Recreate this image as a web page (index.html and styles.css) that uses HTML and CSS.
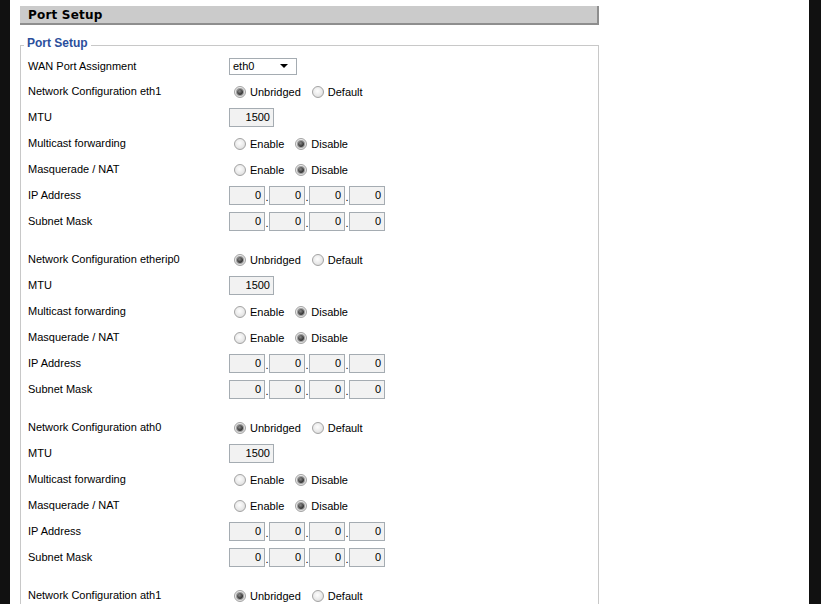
FILE: index.html
```html
<!DOCTYPE html>
<html lang="en">
<head>
    <meta charset="UTF-8">
    <title>Port Setup</title>
<link rel="stylesheet" href="styles.css">
</head>
<body>
<div id="frame">
    <div class="pageTitle">Port Setup</div>
    <fieldset>
        <legend>Port Setup</legend>

        <div class="row first">
            <div class="lab">WAN Port Assignment</div>
            <div class="sel"><span>eth0</span><i class="arrow"></i></div>
        </div>

        <div class="group">
            <div class="row"><div class="lab">Network Configuration eth1</div>
                <div class="opt one"><span class="radio on"></span>Unbridged</div><div class="opt"><span class="radio"></span>Default</div></div>
            <div class="row"><div class="lab">MTU</div><div class="txt mtu">1500</div></div>
            <div class="row"><div class="lab">Multicast forwarding</div>
                <div class="opt one"><span class="radio"></span>Enable</div><div class="opt"><span class="radio on"></span>Disable</div></div>
            <div class="row"><div class="lab">Masquerade / NAT</div>
                <div class="opt one"><span class="radio"></span>Enable</div><div class="opt"><span class="radio on"></span>Disable</div></div>
            <div class="row"><div class="lab">IP Address</div>
                <div class="txt ip">0</div><b>.</b><div class="txt ip">0</div><b>.</b><div class="txt ip">0</div><b>.</b><div class="txt ip">0</div></div>
            <div class="row"><div class="lab">Subnet Mask</div>
                <div class="txt ip">0</div><b>.</b><div class="txt ip">0</div><b>.</b><div class="txt ip">0</div><b>.</b><div class="txt ip">0</div></div>
        </div>

        <div class="group">
            <div class="row"><div class="lab">Network Configuration etherip0</div>
                <div class="opt one"><span class="radio on"></span>Unbridged</div><div class="opt"><span class="radio"></span>Default</div></div>
            <div class="row"><div class="lab">MTU</div><div class="txt mtu">1500</div></div>
            <div class="row"><div class="lab">Multicast forwarding</div>
                <div class="opt one"><span class="radio"></span>Enable</div><div class="opt"><span class="radio on"></span>Disable</div></div>
            <div class="row"><div class="lab">Masquerade / NAT</div>
                <div class="opt one"><span class="radio"></span>Enable</div><div class="opt"><span class="radio on"></span>Disable</div></div>
            <div class="row"><div class="lab">IP Address</div>
                <div class="txt ip">0</div><b>.</b><div class="txt ip">0</div><b>.</b><div class="txt ip">0</div><b>.</b><div class="txt ip">0</div></div>
            <div class="row"><div class="lab">Subnet Mask</div>
                <div class="txt ip">0</div><b>.</b><div class="txt ip">0</div><b>.</b><div class="txt ip">0</div><b>.</b><div class="txt ip">0</div></div>
        </div>

        <div class="group">
            <div class="row"><div class="lab">Network Configuration ath0</div>
                <div class="opt one"><span class="radio on"></span>Unbridged</div><div class="opt"><span class="radio"></span>Default</div></div>
            <div class="row"><div class="lab">MTU</div><div class="txt mtu">1500</div></div>
            <div class="row"><div class="lab">Multicast forwarding</div>
                <div class="opt one"><span class="radio"></span>Enable</div><div class="opt"><span class="radio on"></span>Disable</div></div>
            <div class="row"><div class="lab">Masquerade / NAT</div>
                <div class="opt one"><span class="radio"></span>Enable</div><div class="opt"><span class="radio on"></span>Disable</div></div>
            <div class="row"><div class="lab">IP Address</div>
                <div class="txt ip">0</div><b>.</b><div class="txt ip">0</div><b>.</b><div class="txt ip">0</div><b>.</b><div class="txt ip">0</div></div>
            <div class="row"><div class="lab">Subnet Mask</div>
                <div class="txt ip">0</div><b>.</b><div class="txt ip">0</div><b>.</b><div class="txt ip">0</div><b>.</b><div class="txt ip">0</div></div>
        </div>

        <div class="group">
            <div class="row"><div class="lab">Network Configuration ath1</div>
                <div class="opt one"><span class="radio on"></span>Unbridged</div><div class="opt"><span class="radio"></span>Default</div></div>
        </div>
    </fieldset>
</div>
</body>
</html>
```

FILE: styles.css
```css
*{
    margin:0;
    padding:0;
    box-sizing:border-box;
}
body{
    background:#111;
    font-family:"Liberation Sans",Arial,sans-serif;
    font-size:11px;
    color:#000;
}
#frame{
    margin:0 12px 0 10px;
    height:604px;
    overflow:hidden;
    background:#fff;
    padding:6px 0 0 10px;
}
.pageTitle{
    width:579px;
    height:19px;
    background:#cbcbcb;
    border-bottom:2px solid #8e8e8e;
    border-right:2px solid #8e8e8e;
    padding-left:8px;
    font-family:"DejaVu Sans",Verdana,sans-serif;
    font-weight:bold;
    font-size:12px;
    letter-spacing:.2px;
    line-height:18px;
}
fieldset{
    width:579px;
    height:600px;
    margin-top:11px;
    border:1px solid #c8c8c8;
    padding:0 0 0 7px;
}
legend{
    margin-left:-4px;
    padding:0 3px 4px;
    color:#2b4f9c;
    font-weight:bold;
    font-size:12px;
    line-height:14px;
}
.row{
    display:flex;
    align-items:center;
    height:26px;
}
.row.first{
    height:24px;
}
.group + .group{
    margin-top:12px;
}
.lab{
    width:201px;
    flex:none;
}
.sel{
    width:68px;
    height:17px;
    border:1px solid #a5acb2;
    background:#fff;
    display:flex;
    align-items:center;
    justify-content:space-between;
    padding:0 8px 0 3px;
}
.arrow{
    width:0;
    height:0;
    border-left:4px solid transparent;
    border-right:4px solid transparent;
    border-top:4px solid #000;
}
.opt{
    display:flex;
    align-items:center;
    gap:4px;
    margin-right:11px;
    padding-top:1px;
}
.opt.one{
    margin-left:5px;
}
.radio{
    width:12px;
    height:12px;
    border-radius:50%;
    border:1px solid #a3a3a3;
    background:radial-gradient(circle at 45% 40%,#fdfdfd 0,#e9e9e9 55%,#cfcfcf 100%);
    display:flex;
    align-items:center;
    justify-content:center;
}
.radio.on::after{
    content:"";
    width:6px;
    height:6px;
    border-radius:50%;
    background:radial-gradient(circle at 40% 35%,#8a8a8a 0,#3a3a3a 60%,#1e1e1e 100%);
    box-shadow:0 0 0 1px #9d9d9d;
}
.txt{
    height:19px;
    border:1px solid #a5acb2;
    background:#f2f2f2;
    text-align:right;
    padding-right:3px;
    line-height:17px;
}
.mtu{
    width:45px;
}
.ip{
    width:36px;
}
.row b{
    font-weight:normal;
    width:4px;
    align-self:center;
    padding-top:4px;
    text-align:center;
}
```
